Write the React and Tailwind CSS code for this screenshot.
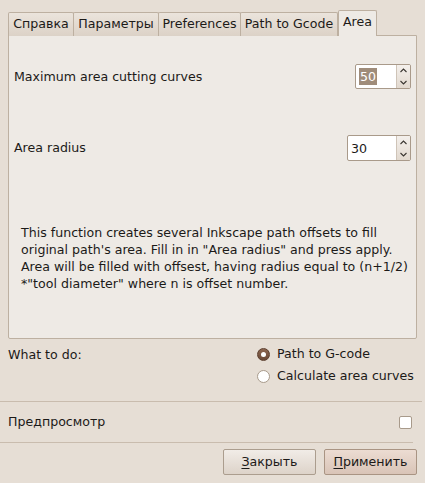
import { useState } from 'react';

const tabs = [
    { label: 'Справка', w: 'w-[66px]' },
    { label: 'Параметры', w: 'w-[86px]' },
    { label: 'Preferences', w: 'w-[83px]' },
    { label: 'Path to Gcode', w: 'w-[98px]' },
];

function SpinBox({ value, selected, width }) {
    return (
        <div className={`flex h-full ${width} border border-[#a99a8a] rounded-[2px] bg-white overflow-hidden`}>
            <div className="flex-1 flex items-center pl-[3px]">
                {selected ? (
                    <span className="bg-[#9f8c7a] text-white leading-[17px] px-[1px]">{value}</span>
                ) : (
                    <span className="leading-[17px]">{value}</span>
                )}
            </div>
            <div className="w-[14px] flex flex-col border-l border-[#cfc4b8] bg-gradient-to-b from-[#f4f0ec] to-[#e2d9cf]">
                <div className="flex-1 flex items-center justify-center">
                    <svg width="7" height="5" viewBox="0 0 7 5"><path d="M0.5 4 L3.5 1 L6.5 4" fill="none" stroke="#3a3631" strokeWidth="1.1" /></svg>
                </div>
                <div className="flex-1 flex items-center justify-center">
                    <svg width="7" height="5" viewBox="0 0 7 5"><path d="M0.5 1 L3.5 4 L6.5 1" fill="none" stroke="#3a3631" strokeWidth="1.1" /></svg>
                </div>
            </div>
        </div>
    );
}

function Radio({ checked }) {
    return checked ? (
        <span className="shrink-0 w-[13px] h-[13px] rounded-full bg-gradient-to-b from-[#8c6650] to-[#6b4a37] border border-[#5c3f2f] flex items-center justify-center">
            <span className="w-[5px] h-[5px] rounded-full bg-white" />
        </span>
    ) : (
        <span className="shrink-0 w-[13px] h-[13px] rounded-full bg-white border border-[#a89a8b]" />
    );
}

export default function App() {
    const [mode, setMode] = useState(0);

    return (
        <div className="w-[425px] h-[483px] bg-[#e6ded5] text-[12.6px] text-[#1c1a18] font-['DejaVu_Sans',sans-serif] overflow-hidden">
            <div className="pt-[10px] pl-[8px] pr-[8px]">
                <div className="flex items-end h-[26px] relative z-10">
                    {tabs.map(t => (
                        <div key={t.label} className={`${t.w} h-[24px] flex items-center justify-center whitespace-nowrap border border-b-0 border-[#bdb0a1] -mr-[1px] rounded-t-[2px] bg-gradient-to-b from-[#ebe4dc] to-[#dcd2c7] pb-[1px]`}>
                            {t.label}
                        </div>
                    ))}
                    <div className="w-[39px] h-[26px] flex items-center justify-center border border-b-0 border-[#bdb0a1] rounded-t-[2px] bg-[#eeeae5] ml-[1px] pb-[3px]">
                        Area
                    </div>
                </div>
                <div className="h-[304px] -mt-[1px] border border-[#bdb0a1] bg-[#eeeae5] rounded-b-[2px] px-[5px] pt-[28px]">
                    <div className="flex items-center justify-between h-[25px]">
                        <span className="pt-[1px]">Maximum area cutting curves</span>
                        <SpinBox value="50" selected width="w-[56px]" />
                    </div>
                    <div className="flex items-center justify-between h-[26px] mt-[46px]">
                        <span>Area radius</span>
                        <SpinBox value="30" width="w-[64px]" />
                    </div>
                    <p className="mt-[63px] ml-[7px] leading-[17px]">
                        This function creates several Inkscape path offsets to fill original path's area. Fill in in "Area radius" and press apply. Area will be filled with offsest, having radius equal to (n+1/2) *"tool diameter" where n is offset number.
                    </p>
                </div>
            </div>

            <div className="flex justify-between pl-[8px] pr-[6px] pt-[4px] h-[62px]">
                <span className="leading-[20px] pt-[2px]">What to do:</span>
                <div className="flex flex-col w-[162px]">
                    {['Path to G-code', 'Calculate area curves'].map((label, i) => (
                        <label key={label} className="flex items-center gap-[7px] h-[22px] cursor-pointer whitespace-nowrap" onClick={() => setMode(i)}>
                            <Radio checked={mode === i} />
                            <span>{label}</span>
                        </label>
                    ))}
                </div>
            </div>

            <div className="border-t border-[#c9bcae] mr-[3px]" />
            <div className="flex items-center justify-between h-[40px] pl-[8px] pr-[13px]">
                <span>Предпросмотр</span>
                <span className="w-[13px] h-[13px] bg-white border border-[#a89a8b] rounded-[2px]" />
            </div>
            <div className="border-t border-[#c9bcae] mr-[12px]" />

            <div className="flex justify-end gap-[8px] pt-[6px] pr-[8px]">
                <button className="w-[93px] h-[26px] border border-[#ab9d8e] rounded-[2px] bg-gradient-to-b from-[#f1ece7] to-[#ddd3c9]">
                    <span className="underline underline-offset-2">З</span>акрыть
                </button>
                <button className="w-[93px] h-[26px] border border-[#a99483] rounded-[2px] bg-gradient-to-b from-[#ecdcd2] to-[#d9c4b7]">
                    <span className="underline underline-offset-2">П</span>рименить
                </button>
            </div>
        </div>
    );
}
